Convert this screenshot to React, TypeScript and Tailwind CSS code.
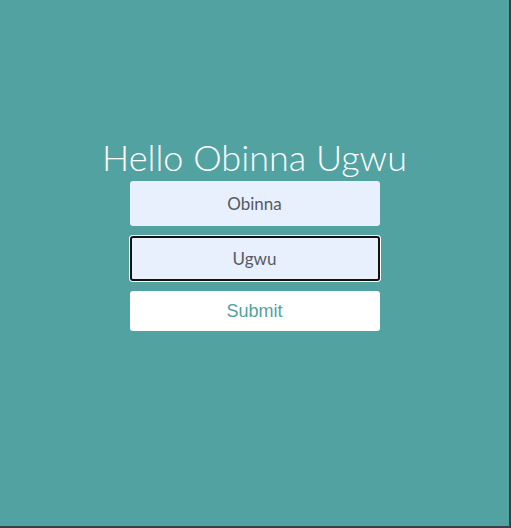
import { useState } from "react";

const App = () => {
  const [first, setFirst] = useState("Obinna");
  const [last, setLast] = useState("Ugwu");

  return (
    <main className="w-[511px] h-[528px] bg-[#52a2a2] border-r-2 border-b-2 border-[#3a3f44] flex flex-col items-center pt-[133px] font-['Lato',sans-serif]">
      <h1 className="text-[36px] font-light leading-[48px] text-white">
        Hello {first} {last}
      </h1>
      <form
        className="flex flex-col gap-[10px] w-[250px]"
        onSubmit={(e) => e.preventDefault()}
      >
        <input
          value={first}
          onChange={(e) => setFirst(e.target.value)}
          className="h-[45px] w-full rounded-[3px] bg-[#e8f0fe] text-center text-[17px] text-[#545a63] outline-none"
        />
        <input
          autoFocus
          value={last}
          onChange={(e) => setLast(e.target.value)}
          className="h-[45px] w-full rounded-[3px] bg-[#e8f0fe] text-center text-[17px] text-[#545a63] outline-2 outline-offset-[-2px] outline-[#111] ring-1 ring-white caret-black"
        />
        <button
          type="submit"
          className="h-[40px] w-full rounded-[3px] bg-white text-[18px] text-[#52a2a2] font-['Liberation_Sans',Arial,sans-serif]"
        >
          Submit
        </button>
      </form>
    </main>
  );
};

export default App;
